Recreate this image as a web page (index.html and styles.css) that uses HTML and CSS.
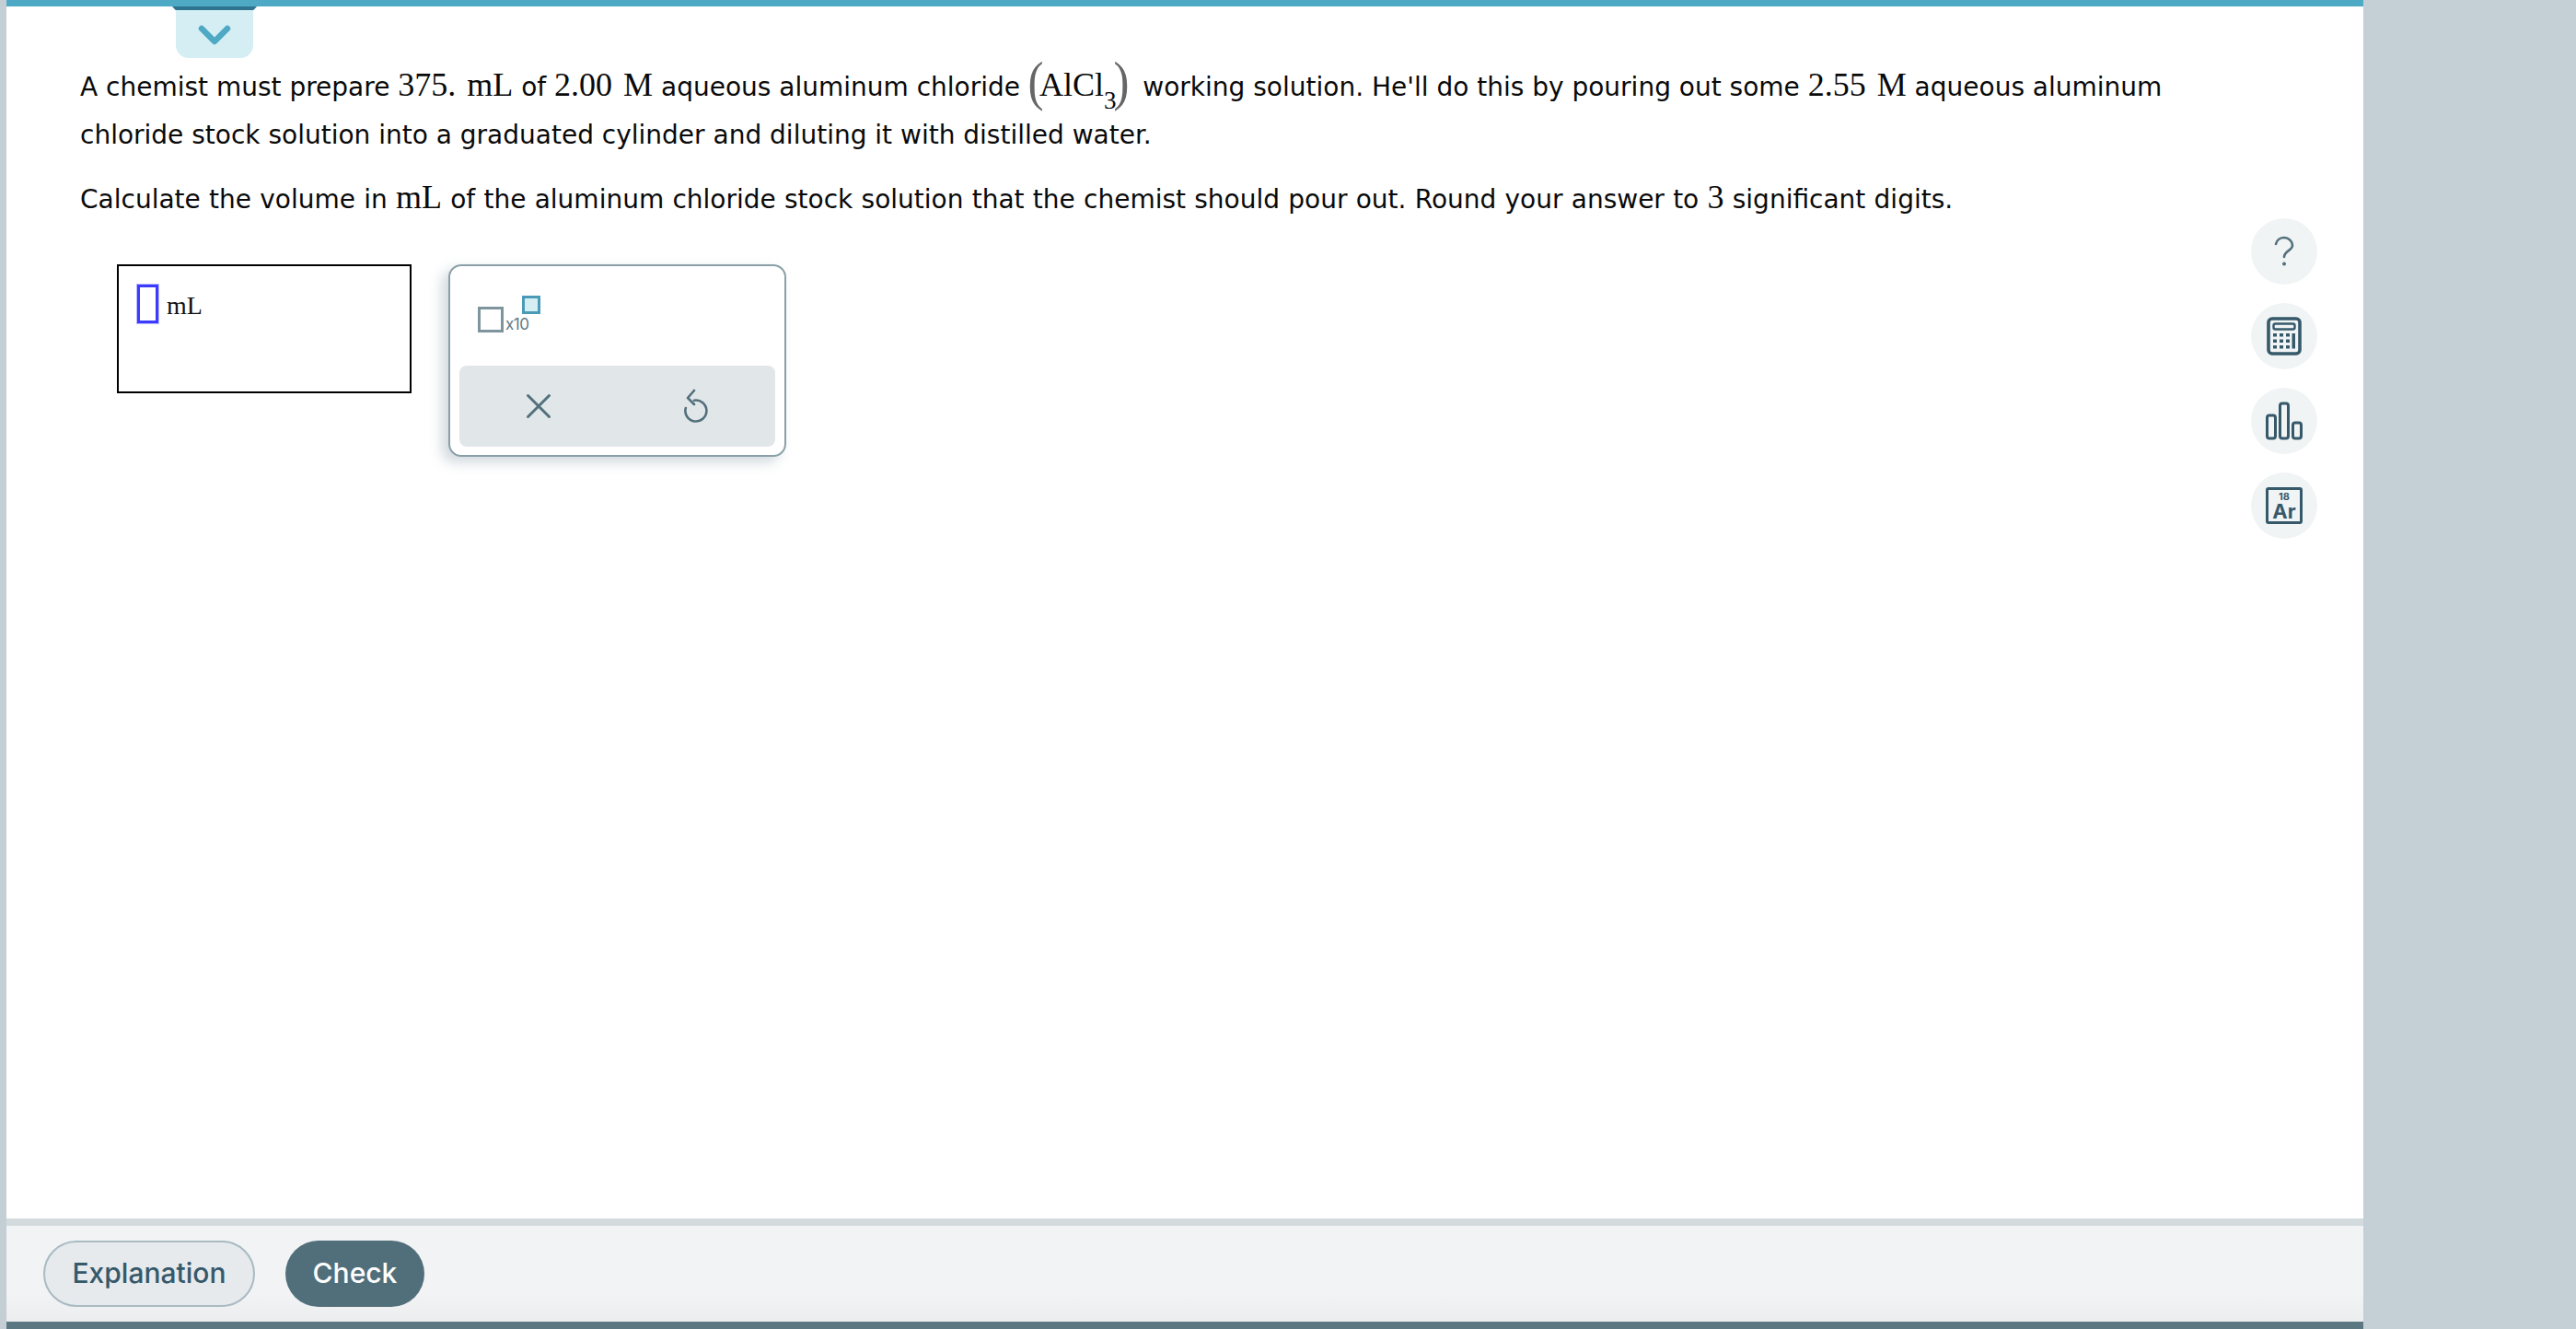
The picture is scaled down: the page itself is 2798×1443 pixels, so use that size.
FILE: index.html
```html
<!DOCTYPE html>
<html lang="en">
<head>
<meta charset="utf-8">
<title>Dilution problem</title>
<link rel="stylesheet" href="styles.css">
</head>
<body>
<div class="page">
  <div class="left-strip"></div>
  <div class="main">
    <div class="top-bar"></div>
    <div class="tab">
      <svg class="tab-chevron" width="36" height="24" viewBox="0 0 36 24"><path d="M4 4 L18 18 L32 4" fill="none" stroke="#4ea9c4" stroke-width="6.5" stroke-linecap="round" stroke-linejoin="round"/></svg>
    </div>
    <div class="content">
      <div class="question">
        <p class="line first">A chemist must prepare <span class="m">375. mL</span> of <span class="m">2.00 M</span> aqueous aluminum chloride <span class="formula"><span class="paren open">(</span><span class="m">AlCl<sub>3</sub></span><span class="paren close">)</span></span> working solution. He'll do this by pouring out some <span class="m">2.55 M</span> aqueous aluminum chloride stock solution into a graduated cylinder and diluting it with distilled water.</p>
        <p class="line second">Calculate the volume in <span class="m">mL</span> of the aluminum chloride stock solution that the chemist should pour out. Round your answer to <span class="m">3</span> significant digits.</p>
        <div class="work">
          <div class="answer">
            <span class="cursor"></span><span class="unit">mL</span>
          </div>
          <div class="palette">
            <div class="sci">
              <span class="sq-main"></span><span class="x10">x10</span><span class="sq-exp"></span>
            </div>
            <div class="actions">
              <svg width="30" height="30" viewBox="0 0 30 30"><path d="M3.5 3.5 L26.5 26.5 M26.5 3.5 L3.5 26.5" fill="none" stroke="#52707c" stroke-width="3" stroke-linecap="round"/></svg>
              <svg width="30" height="40" viewBox="0 0 30 40"><path d="M13 13.7 A11.5 11.5 0 1 1 3.8 22 M13 3 L6 11 L13 18" fill="none" stroke="#52707c" stroke-width="2.6" stroke-linecap="round" stroke-linejoin="round"/></svg>
            </div>
          </div>
        </div>
      </div>
      <div class="tools">
        <div class="tool">
          <svg width="24" height="34" viewBox="0 0 24 34"><path d="M3 9 C4 4.5 8 2 12 2 C17 2 21 6 21 10.5 C21 16 12 16.5 12 23" fill="none" stroke="#52707c" stroke-width="2.6" stroke-linecap="round"/><circle cx="12" cy="30.5" r="2" fill="#52707c"/></svg>
        </div>
        <div class="tool">
          <svg width="38" height="42" viewBox="0 0 38 42"><rect x="2" y="2" width="34" height="38" rx="4" fill="none" stroke="#36596a" stroke-width="3.6"/><rect x="7.5" y="7.5" width="23" height="6" rx="2" fill="none" stroke="#36596a" stroke-width="2.4"/><path d="M7 18h4v3.5h-4zM14 18h4v3.5h-4zM21 18h4v3.5h-4zM7 24.5h4v3.5h-4zM14 24.5h4v3.5h-4zM21 24.5h4v3.5h-4zM7 31h4v3.5h-4zM14 31h4v3.5h-4zM21 31h4v3.5h-4zM27.5 18h3.5v16.5h-3.5z" fill="#36596a"/></svg>
        </div>
        <div class="tool">
          <svg width="40" height="42" viewBox="0 0 40 42"><rect x="1.5" y="15" width="9" height="25" rx="2.5" fill="none" stroke="#36596a" stroke-width="3"/><rect x="15.5" y="2" width="9" height="38" rx="2.5" fill="none" stroke="#36596a" stroke-width="3"/><rect x="29.5" y="23" width="9" height="17" rx="2.5" fill="none" stroke="#36596a" stroke-width="3"/></svg>
        </div>
        <div class="tool">
          <div class="element"><span class="el-num">18</span><span class="el-sym">Ar</span></div>
        </div>
      </div>
    </div>
    <div class="footer-rule"></div>
    <div class="footer">
      <button class="btn btn-outline">Explanation</button>
      <button class="btn btn-solid">Check</button>
    </div>
    <div class="bottom-bar"></div>
  </div>
  <div class="right-side"></div>
</div>
</body>
</html>
```

FILE: styles.css
```css
* { box-sizing: border-box; }
html, body { margin: 0; padding: 0; height: 100%; overflow: hidden; }
body { background: #c3cfd4; font-family: "DejaVu Sans", sans-serif; color: #000; }
.page { display: flex; width: 2798px; height: 1443px; }
.left-strip { width: 7px; background: #c3cfd4; flex: none; }
.right-side { width: 231px; background: #c4d0d5; flex: none; }
.main { position: relative; flex: 1; display: flex; flex-direction: column; background: #fff; min-width: 0; }
.top-bar { height: 7px; background: #4ea9c4; flex: none; }
.tab { position: absolute; left: 184px; top: 7px; width: 84px; height: 56px; background: #d5eef4; border-radius: 0 0 14px 14px; display: flex; justify-content: center; padding-top: 20px; }
.tab::before { content: ""; position: absolute; left: -4px; right: -4px; top: 0; height: 4px; background: #2e7390; clip-path: polygon(0 0, 100% 0, 96% 100%, 4% 100%); }
.tab-chevron { display: block; }
.content { flex: 1; display: flex; min-height: 0; }
.question { flex: 1; padding: 62px 0 0 80px; min-width: 0; }
.line { margin: 0; font-size: 28px; line-height: 52px; color: #0a0a0a; width: 2300px; }
.second { margin-top: 18px; word-spacing: 0.35px; }
.m { font-family: "Liberation Serif", serif; font-size: 36px; line-height: 1; word-spacing: 3px; }
.m sub { font-size: 27px; line-height: 0; vertical-align: -14px; }
.formula { white-space: nowrap; margin-right: 6px; }
.paren { display: inline-block; font-family: "Liberation Serif", serif; font-size: 60px; font-weight: 400; line-height: 0; color: #666; vertical-align: -4px; transform: scaleX(.85); }
.open { margin: 0 -6px 0 -2px; }
.close { margin: 0 -2px 0 -4px; }
.work { display: flex; gap: 40px; margin: 44px 0 0 40px; align-items: flex-start; }
.answer { width: 320px; height: 140px; border: 2px solid #000; padding: 20px 0 0 20px; display: flex; align-items: flex-start; }
.cursor { width: 23px; height: 42px; border: 3px solid #3b3bff; box-shadow: 0 0 0 1px #b9b9ff; flex: none; }
.unit { font-family: "Liberation Serif", serif; font-size: 28px; margin: 7px 0 0 9px; color: #111; }
.palette { width: 367px; height: 209px; border: 2px solid #8aa0a8; border-radius: 14px; background: #fff; box-shadow: -7px 6px 14px rgba(90, 120, 135, .28); padding: 0 10px; display: flex; flex-direction: column; justify-content: flex-end; }
.sci { position: relative; flex: 1; }
.sq-main { position: absolute; left: 20px; top: 44px; width: 28px; height: 28px; border: 3.5px solid #7e959e; }
.x10 { position: absolute; left: 50px; top: 53px; font-family: Inter, sans-serif; font-size: 17px; color: #5e7a86; letter-spacing: -0.5px; }
.sq-exp { position: absolute; left: 68px; top: 32px; width: 20px; height: 20px; border: 3.5px solid #4a9ab8; background: #d5eef4; }
.actions { height: 88px; margin-bottom: 9px; background: #e1e6e9; border-radius: 8px; display: grid; grid-template-columns: 1fr 1fr; justify-items: center; align-items: center; }
.tools { width: 122px; flex: none; padding-top: 230px; display: flex; flex-direction: column; gap: 20px; align-items: flex-start; }
.tool { width: 72px; height: 72px; border-radius: 50%; background: #f1f4f5; display: flex; align-items: center; justify-content: center; }
.element { width: 40px; height: 40px; border: 3.5px solid #36596a; border-radius: 3px; display: flex; flex-direction: column; align-items: center; color: #36596a; font-family: Inter, sans-serif; font-weight: 700; line-height: 1; }
.el-num { font-size: 11px; margin-top: 2px; }
.el-sym { font-size: 22px; margin-top: -1.5px; }
.footer-rule { height: 8px; background: #d3dbde; flex: none; }
.footer { height: 104px; flex: none; background: linear-gradient(#f1f3f5 70%, #ecedef); display: flex; align-items: center; gap: 33px; padding: 0 0 0 40px; }
.btn { height: 72px; border-radius: 36px; font-family: Inter, sans-serif; font-size: 30px; font-weight: 500; padding: 0 0 3px; }
.btn-outline { width: 230px; background: #e6eaed; border: 2px solid #a9bac2; color: #36596a; }
.btn-solid { width: 151px; background: #516f7b; border: 0; color: #fff; }
.bottom-bar { height: 8px; background: #5b7782; flex: none; }
```
